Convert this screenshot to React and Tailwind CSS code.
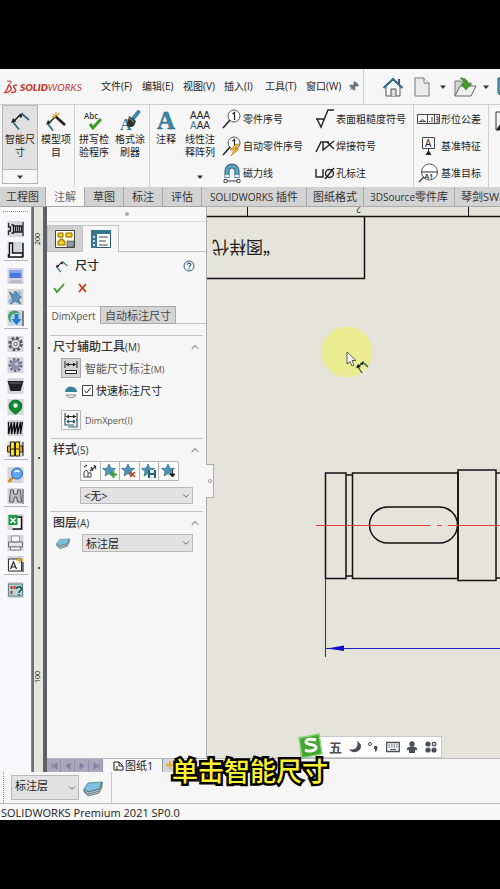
import { useState } from 'react';
import { Pin, ChevronUp, ChevronDown } from 'lucide-react';
import clsx from 'clsx';

const Svg = ({ w = 16, h = w, box = `0 0 ${w} ${h}`, className, children }) => (
  <svg width={w} height={h} viewBox={box} fill="none" aria-hidden="true" className={clsx('shrink-0 overflow-visible', className)}>
    {children}
  </svg>
);

/* ---------- menu bar ---------- */

const DsLogo = () => (
  <Svg w={14} h={14}>
    <path d="M3 1.2h3.6c1.3.2.8 1.8-2 3.2" stroke="#c8352b" strokeWidth="1" />
    <path d="M4.6 5.2C3.8 8 2.4 11 .8 12.6c3.6.2 6.2-1.8 6.4-4 .1-1.8-1.4-2.9-2.6-3.4z" stroke="#c8352b" strokeWidth="1.3" />
    <path d="M13 5.4c-2.2-.8-4 .2-3.4 1.7.4 1 2.4 1.6 2.1 3.2-.4 1.9-2.6 2.4-4.6 2" stroke="#c8352b" strokeWidth="1.4" />
  </Svg>
);

const DocIcon = () => (
  <Svg w={16} h={20}>
    <path d="M1 1h9l5 5v13H1z" fill="#ececec" stroke="#777" />
    <path d="M10 1v5h5" fill="#fff" stroke="#777" />
  </Svg>
);

const OpenIcon = () => (
  <Svg w={23} h={20}>
    <path d="M1 19V4h6l2 2h8v5" fill="#d5d5d5" stroke="#777" />
    <path d="M1 19l5-10h16l-5 10z" fill="#eee" stroke="#666" />
    <path d="M6 1c5 0 8 2 8 6h3l-5 6-5-6h3C10 4 8 3 6 1z" fill="#3f9a2b" stroke="#2a731b" strokeWidth=".6" />
  </Svg>
);

const SaveIcon = () => (
  <Svg w={20} h={20}>
    <path d="M1 1h18v18H4l-3-3z" fill="#5a9dbb" stroke="#245d78" />
    <path d="M5 1h10v8H5z" fill="#fff" />
    <path d="M6 13h8v6H6z" fill="#d5e4ea" />
  </Svg>
);

const Caret = () => (
  <Svg w={6} h={4}>
    <path d="M0 .5h6L3 4z" fill="#333" />
  </Svg>
);

const menus = ['文件(F)', '编辑(E)', '视图(V)', '插入(I)', '工具(T)', '窗口(W)'];

const MenuBar = () => (
  <header className="flex h-9 shrink-0 items-center border-b border-[#cfcfcf]">
    <div className="flex w-[98px] shrink-0 items-center gap-0.5 pl-1">
      <DsLogo />
      <span className="font-['Lato'] text-[10px] italic leading-none text-[#c8352b]">
        <b className="font-extrabold">SOLID</b>WORKS
      </span>
    </div>
    <nav className="flex shrink-0">
      {menus.map((m) => (
        <button key={m} className="w-[41px] text-left text-[10px] whitespace-nowrap text-[#222] pl-[3px]">
          {m}
        </button>
      ))}
    </nav>
    <button aria-label="固定" className="ml-1 mr-1">
      <Pin className="h-[11px] w-[11px] rotate-45 fill-gray-500 text-gray-500" />
    </button>
    <div className="flex h-full shrink-0 items-center border-l border-[#cfcfcf] pl-[18px]">
      <button aria-label="主页">
        <Svg w={22} h={20}>
          <path d="M4 9l7-6 7 6v10H4z" fill="#fafafa" stroke="#555" />
          <path d="M9 19v-7h5v7" stroke="#555" fill="#ddd" />
          <path d="M16 2v4l2 2V2z" fill="#555" />
          <path d="M1.5 11L11 2l9.500 9" stroke="#2f6c8b" strokeWidth="2.200" />
        </Svg>
      </button>
      <button aria-label="新建" className="ml-2.5"><DocIcon /></button>
      <button aria-label="新建选项" className="ml-2.5"><Caret /></button>
      <button aria-label="打开" className="ml-2"><OpenIcon /></button>
      <button aria-label="打开选项" className="ml-1.5"><Caret /></button>
      <button aria-label="保存" className="ml-2"><SaveIcon /></button>
    </div>
  </header>
);

/* ---------- ribbon ---------- */

const SmartDim = ({ w = 20, className }) => (
  <Svg w={w} box="0 0 20 20" className={className}>
    <path d="M3 11l8-8" stroke="#222" strokeWidth="1.600" />
    <path d="M1 12l2-5 3.500 3.500zM8 5l5-3.500L11.500 7z" fill="#222" />
    <path d="M3 11l6 7.500M12 3l7 6" stroke="#2d6c87" strokeWidth="1.800" />
  </Svg>
);

const ModelItem = () => (
  <Svg w={20}>
    <path d="M2 13l8-8" stroke="#222" strokeWidth="1.500" />
    <path d="M0 14l2-5 3 3z" fill="#222" />
    <path d="M2 13l5 6.500" stroke="#2d6c87" strokeWidth="1.800" />
    <path d="M9 5l10 9" stroke="#222" strokeWidth="2.600" />
    <path d="M7 3l3 3M10 1v3M6 6h3M13 2l-2 3" stroke="#d9a13a" strokeWidth="1.300" />
  </Svg>
);

const Spell = () => (
  <Svg w={20}>
    <text x="0" y="8" fontSize="8" fontWeight="600" fill="#333" fontFamily="Open Sans">Abc</text>
    <path d="M6 13l3 4 8-9" stroke="#3b9a2a" strokeWidth="3" />
  </Svg>
);

const Painter = () => (
  <Svg w={20}>
    <text x="0" y="19" fontSize="16" fontWeight="700" fill="#2f7896" fontFamily="Liberation Serif">A</text>
    <path d="M18.500 1l-5 6" stroke="#3c87a8" strokeWidth="4" strokeLinecap="round" />
    <path d="M9 5l7 5-2 5c-3 2-6 1-7-1z" fill="#333" />
    <path d="M9 7l5 4" stroke="#999" />
  </Svg>
);

const NoteA = () => (
  <Svg w={20}>
    <text x="1" y="18" fontSize="25" fontWeight="700" fill="#3a86a6" stroke="#1f5d78" strokeWidth=".5" fontFamily="Liberation Serif">A</text>
  </Svg>
);

const LinearNote = () => (
  <Svg w={22} h={20}>
    <g fontSize="10" fontFamily="Liberation Sans" fill="#222">
      <text x="1" y="8">AAA</text>
      <text x="1" y="18"><tspan fill="#2d7fa3">A</tspan>AA</text>
    </g>
  </Svg>
);

const Balloon = ({ bolt }) => (
  <Svg w={20} h={20}>
    <circle cx="12" cy="7" r="6" stroke="#555" fill="#fff" />
    <path d="M8 11l-7 8" stroke="#222" strokeWidth="1.500" />
    <path d="M10.500 5l2-1.500V11" stroke="#222" strokeWidth="1.200" />
    {bolt && <path d="M14 8l-6 6h4l-3 6 8-7h-4l4-5z" fill="#f0b429" stroke="#a96d10" strokeWidth=".5" />}
  </Svg>
);

const Magnet = () => (
  <Svg w={20} h={20}>
    <path d="M5 15V8a5 5 0 0 1 10 0v7" stroke="#1f5d78" strokeWidth="5" />
    <path d="M5 15V8a5 5 0 0 1 10 0v7" stroke="#5fa6c4" strokeWidth="3" />
    <path d="M3 13h4M13 13h4" stroke="#eee" strokeWidth="2" />
    <path d="M3 18h14" stroke="#333" />
    <path d="M2 16.500h3v3H2zM15 16.500h3v3h-3z" fill="#fff" stroke="#333" strokeWidth=".8" />
  </Svg>
);

const Roughness = () => (
  <Svg w={20} h={20}>
    <path d="M1 10h8M2 10l4 8L13 1h6" stroke="#222" strokeWidth="1.400" />
  </Svg>
);

const Weld = () => (
  <Svg w={20} h={14}>
    <path d="M1 13L6 3h8M8 3v8l11-9M12 3l7 7" stroke="#222" strokeWidth="1.400" />
  </Svg>
);

const Hole = () => (
  <Svg w={20} h={14}>
    <path d="M1 3v8h7V3M10 13l9-11" stroke="#222" strokeWidth="1.400" />
    <circle cx="14.500" cy="7.500" r="4" stroke="#222" strokeWidth="1.400" />
  </Svg>
);

const GeoTol = () => (
  <Svg w={23} h={12}>
    <path d="M.5 1.500h22v9H.5zM10.500 1.500v9M17.500 1.500v9M2 8.500h7M3.500 8a2.500 3 0 0 1 4 0" stroke="#444" />
    <path d="M12.500 8v1M15 4v5M19 4h2v2.500h-1.500H21V9h-2" stroke="#444" />
  </Svg>
);

const Datum = () => (
  <Svg w={23} h={20}>
    <path d="M5.500 1.500h12v11h-12zM11.500 12.500V19" stroke="#444" />
    <path d="M8.500 19l3-5 3 5z" fill="#222" />
    <text x="8" y="11" fontSize="10" fill="#222" fontFamily="Open Sans">A</text>
  </Svg>
);

const DatumTarget = () => (
  <Svg w={23} h={20}>
    <circle cx="12.500" cy="9" r="8" stroke="#555" fill="#fff" />
    <path d="M4.500 9h16M7 14l-5 5" stroke="#333" strokeWidth="1.200" />
    <text x="7.500" y="15.500" fontSize="7" fontWeight="600" fill="#222" fontFamily="Open Sans">A1</text>
  </Svg>
);

const BigButton = ({ icon, lines, caret }) => (
  <button className="flex h-full w-9 shrink-0 flex-col items-center pt-1.5 text-[10px] leading-[13px] text-[#222]">
    {icon}
    <span className="mt-[2px] whitespace-nowrap">{lines[0]}</span>
    <span>{lines[1]}</span>
    {caret && <span className="mt-auto mb-2"><Caret /></span>}
  </button>
);

const SmallColumn = ({ items, className }) => (
  <div className={clsx('flex shrink-0 flex-col justify-between py-1', className)}>
    {items.map(([icon, label]) => (
      <button key={label} className="flex h-5 items-center gap-px text-[10px] whitespace-nowrap text-[#222]">
        {icon}
        {label}
      </button>
    ))}
  </div>
);

const Ribbon = () => (
  <section className="flex h-[82px] shrink-0 overflow-hidden">
    <div className="flex shrink-0 border-r border-[#d0d0d0] pl-0.5">
      <button className="flex h-[79px] w-9 flex-col items-center border border-[#b5b5b5] bg-[#e0e0e0] pt-[5px] text-[10px] leading-[13px] text-[#222]">
        <SmartDim />
        <span className="mt-0.5">智能尺</span>
        <span>寸</span>
        <span className="mt-auto flex h-3.5 w-full items-center justify-center border-t border-[#b5b5b5] bg-[#f6f6f6]"><Caret /></span>
      </button>
      <BigButton icon={<ModelItem />} lines={['模型项', '目']} />
    </div>
    <div className="flex shrink-0 border-r border-[#d0d0d0] pr-px pl-px">
      <BigButton icon={<Spell />} lines={['拼写检', '验程序']} />
      <BigButton icon={<Painter />} lines={['格式涂', '刷器']} />
    </div>
    <div className="flex shrink-0 border-r border-[#d0d0d0]">
      <div className="flex w-8 justify-center"><BigButton icon={<NoteA />} lines={['注释', '']} /></div>
      <div className="flex pr-1"><BigButton icon={<LinearNote />} lines={['线性注', '释阵列']} caret /></div>
      <SmallColumn
        className="w-[93px]"
        items={[[<Balloon />, '零件序号'], [<Balloon bolt />, '自动零件序号'], [<Magnet />, '磁力线']]}
      />
      <SmallColumn
        className="w-[98px]"
        items={[[<Roughness />, '表面粗糙度符号'], [<Weld />, '焊接符号'], [<Hole />, '孔标注']]}
      />
    </div>
    <div className="flex shrink-0 border-r border-[#d0d0d0] pl-[3px]">
      <SmallColumn
        className="w-[71px]"
        items={[[<GeoTol />, '形位公差'], [<Datum />, '基准特征'], [<DatumTarget />, '基准目标']]}
      />
    </div>
    <button aria-label="区域剖面线" className="mt-1.5 ml-1.5 h-5 shrink-0">
      <Svg w={20}>
        <path d="M1 1h18v18H1z" stroke="#333" />
        <path d="M1 19l7-10 5 10z" fill="#222" />
      </Svg>
    </button>
  </section>
);

const tabs = [
  ['', '工程图'], ['', '注解'], ['', '草图'], ['', '标注'], ['', '评估'],
  ['SOLIDWORKS ', '插件'], ['', '图纸格式'], ['3DSource', '零件库'], ['', '琴剑SW工具'],
];

const RibbonTabs = ({ active, onChange }) => (
  <nav className="flex h-5 shrink-0 overflow-hidden border-b border-[#a8a8a8] bg-[#d2d2d2]">
    {tabs.map(([latin, text]) => (
      <button
        key={text}
        onClick={() => onChange(text)}
        className={clsx(
          'flex shrink-0 items-center border-r border-[#a8a8a8] text-[11px] leading-none whitespace-pre',
          text.length > 2 ? 'px-1.5' : 'px-2',
          active === text ? 'bg-[#f6f6f6] text-[#666]' : 'text-[#333]'
        )}
      >
        {latin && <span className="text-[10px]">{latin}</span>}
        {text}
      </button>
    ))}
  </nav>
);

/* ---------- left tool strip ---------- */

const Tile = ({ children }) => (
  <Svg w={17} h={16} box="0 0 16 16">
    <path d="M0 0h16v16H0z" fill="#d4d6da" />
    {children}
  </Svg>
);

const toolGroups = [
  [
    ['螺栓', <Tile><path d="M1 2v4h2v4H1v4M4 4h2v8H4M6 5h8v6H6M8 5v6M10 5v6M12 5v6M15.500 1v14" stroke="#222" strokeWidth="1.300" /></Tile>],
    ['型材', <Tile><path d="M2 1h3v10h10v4H1V13h1zM15.500 1v14" stroke="#111" strokeWidth="1.400" fill="#fff" /></Tile>],
  ],
  [
    ['显示器', <Tile><path d="M2 2h12v8H2z" fill="#4a78e0" /><path d="M2 2h12v3H2z" fill="#86aaf2" /><path d="M3 12h10l2 3H1z" fill="#b6bccb" /></Tile>],
    ['装配', <Tile><path d="M2 3l4 3 2-4 3 4 3 2-3 2 2 5-5-3-5 3 2-5z" fill="#5f92bd" stroke="#37597c" strokeWidth=".7" /><circle cx="12" cy="4" r="2" fill="#8db9dc" /><circle cx="3" cy="12" r="2" fill="#8db9dc" /></Tile>],
    ['下载', <Tile><circle cx="7" cy="7" r="6.500" fill="#46a067" /><circle cx="9" cy="9" r="6" fill="#b7d6ef" /><path d="M7 4h4v5h3l-5 6-5-6h3z" fill="#2c75cf" /><path d="M15.500 1v15" stroke="#222" /></Tile>],
  ],
  [
    ['齿轮', <Tile><circle cx="8" cy="8" r="6" stroke="#555" strokeWidth="2.500" strokeDasharray="2.700 2" /><circle cx="8" cy="8" r="4.500" fill="#eee" stroke="#555" /><circle cx="8" cy="8" r="1.800" fill="#fff" stroke="#555" /></Tile>],
    ['斜齿轮', <Tile><circle cx="8" cy="8" r="5.500" stroke="#686d8e" strokeWidth="3" strokeDasharray="2.300 1.500" /><circle cx="8" cy="8" r="4.800" fill="#8c90aa" /><circle cx="9" cy="7" r="1.500" fill="#d3d5e2" /></Tile>],
    ['带轮', <Tile><path d="M0 3h16l-3 10H3z" fill="#222" /><path d="M2 5h12" stroke="#777" /></Tile>],
    ['凸轮', <Tile><path d="M8 15C3 12 1 9 2 5c2-5 10-5 12 0 1 4-1 7-6 10z" fill="#0d8a31" stroke="#07601f" /><circle cx="8" cy="6.500" r="2.200" fill="#fff" /></Tile>],
    ['弹簧', <Tile><path d="M1 2v12L4 2v12L7 2v12l3-12v12l3-12v12l2-12" stroke="#111" strokeWidth="1.300" /></Tile>],
    ['轴承', <Tile><path d="M0 5h15v6H0z" fill="#f4a21c" stroke="#222" /><path d="M3 1h4v14H3zM8 1h4v14H8z" fill="#ffe11f" stroke="#222" /><path d="M3 8h9M15.500 1v14" stroke="#222" /></Tile>],
  ],
  [
    ['查找', <Tile><path d="M1 15l5-5" stroke="#d98d27" strokeWidth="3" /><circle cx="9.500" cy="6.500" r="5.500" fill="#5ea8f2" stroke="#2466bb" /><path d="M7 5a3.500 3.500 0 0 1 5 0" stroke="#fff" strokeWidth="1.500" /></Tile>],
    ['望远镜', <Tile><path d="M3 2h3v4h4V2h3l1 12h-4l-1-5H7l-1 5H2zM15.500 1v15" fill="#bbb" stroke="#555" /></Tile>],
  ],
  [
    ['表格', <Tile><path d="M6 3h8v12H5" fill="#fff" stroke="#111" strokeWidth="1.500" /><path d="M1 1h9v10H1z" fill="#1f9a42" /><path d="M3 4l5 5M8 4L3 9" stroke="#fff" strokeWidth="1.500" /></Tile>],
    ['打印', <Tile><path d="M4 1h8v6H4z" fill="#fff" stroke="#999" /><path d="M1 7h14v5H1z" fill="#e7e7e7" stroke="#666" /><path d="M3 12h10v3H3z" fill="#fff" stroke="#777" /></Tile>],
    ['文字', <Tile><path d="M1 3h13v12H1z" fill="#fff" stroke="#333" /><path d="M3 13L6 6l3 7M4 11h4" stroke="#222" strokeWidth="1.200" /><path d="M12 0l1 3 3 1-3 1-1 3-1-3-3-1 3-1z" fill="#f0a01e" /><path d="M15.500 6v10" stroke="#111" /></Tile>],
  ],
  [
    ['帮助', <Tile><path d="M1 2h14v12H1z" fill="#b4d4d6" stroke="#5c8287" /><path d="M3 4h2v3H3zM6 4h2v3H6zM3 9h2v3H3z" fill="#cf2727" /><path d="M9 7c0-3 5-3 5 0 0 2-2.500 1.500-2.500 4M11.500 12v1.500" stroke="#194b50" strokeWidth="1.500" /></Tile>],
  ],
];

const ToolStrip = () => (
  <aside className="flex w-8 shrink-0 flex-col items-center border-r border-[#8b8e92] bg-[#f8f8fa] pt-1">
    <div className="mb-0.5 w-[25px] border-t border-dotted border-[#888]" />
    {toolGroups.map((group, i) => (
      <div
        key={i}
        className={clsx('flex w-6 flex-col items-center gap-[5px] pb-0.5 pt-[7px]', i < toolGroups.length - 1 && 'border-b border-[#b9b2bb]')}
      >
        {group.map(([label, icon]) => (
          <button key={label} aria-label={label}>{icon}</button>
        ))}
      </div>
    ))}
  </aside>
);

const Tick = () => <span className="my-[54px] ml-1 h-0.5 w-0.5 shrink-0 bg-[#555]" />;

const Ruler = () => (
  <div className="flex w-[15px] shrink-0 flex-col items-start overflow-hidden border-r-4 border-l-2 border-r-[#5c6068] border-l-[#6c7076] bg-[#e5e5db] pt-[26px] text-[7px] leading-none text-[#222]">
    <span className="mb-12 [writing-mode:vertical-rl] rotate-180">200</span>
    <Tick />
    <Tick />
    <Tick />
    <span className="mt-12 [writing-mode:vertical-rl] rotate-180">100</span>
  </div>
);

/* ---------- property panel ---------- */

const Section = ({ title, hotkey, children, className }) => (
  <section className={clsx('mx-[3px] border-t border-[#c4c4c4]', className)}>
    <h3 className="flex h-[22px] items-center justify-between pr-0.5 pl-[3px] text-[12px] font-medium text-[#333]">
      <span>{title}<span className="text-[10px]">({hotkey})</span></span>
      <ChevronUp className="h-3 w-3 text-[#555]" />
    </h3>
    {children}
  </section>
);

const Dropdown = ({ label, value, className, selectClass }) => (
  <div className={clsx('relative', className)}>
    <select aria-label={label} className={clsx('block w-full appearance-none border border-[#b9b9b9] bg-[#e2e2e2] pl-[3px] text-[11px] leading-none text-[#222]', selectClass)}>
      <option>{value}</option>
    </select>
    <ChevronDown className="pointer-events-none absolute top-1/2 right-0.5 h-2.5 w-2.5 -translate-y-1/2 text-[#555]" />
  </div>
);

const Star = ({ children }) => (
  <Svg w={16}>
    <path d="M7 1l1.800 4.200 4.700.3-3.600 3 1.200 4.500L7 10.500 3 13l1.100-4.500-3.600-3 4.700-.3z" fill="#4d93b3" stroke="#2a6580" strokeWidth=".7" />
    {children}
  </Svg>
);

const styleButtons = [
  ['应用默认属性', <Svg w={16}><path d="M2 9l2-2 2 2v5H2zM6 10h3v4H6" stroke="#444" /><path d="M2 4l3-2M8 8l6-5M9 4l2 4M12 2l2 4" stroke="#333" strokeWidth="1.200" /></Svg>],
  ['添加样式', <Star><path d="M11.500 8v7M8 11.500h7" stroke="#3c9a2b" strokeWidth="2" /></Star>],
  ['删除样式', <Star><path d="M9 9l5 5M14 9l-5 5" stroke="#c5391d" strokeWidth="1.500" /></Star>],
  ['保存样式', <Star><path d="M7 7h8v8H7z" fill="#285f7b" /><path d="M9 7h4v3H9zM9 12h4v3H9z" fill="#e5eff4" /></Star>],
  ['加载样式', <Star><path d="M11.500 7v4M9 11l2.500 3 2.500-3z" stroke="#222" fill="#222" /></Star>],
];

const LayerIcon = ({ w = 14 }) => (
  <Svg w={w} h={w} box="0 0 20 20">
    <path d="M1 11l4-6 14-1-3 7-11 3z" fill="#7cc1e2" stroke="#44738a" strokeWidth=".7" />
    <path d="M1 11l4 3 12-3 2-7v5l-3 6-11 3-4-4z" fill="#b8cbd3" stroke="#4c5c64" strokeWidth=".8" />
    <path d="M1 13l4 3 12-3" stroke="#596e78" strokeWidth=".8" />
  </Svg>
);

const DimBox = ({ double }) => (
  <Svg w={16}>
    <path d="M2 1v7M14 1v7M3 4.500h10" stroke="#222" />
    <path d="M3 4.500l3-2v4zM13 4.500l-3-2v4z" fill="#222" />
    {double ? (
      <path d="M2 7v6h9M14 7v8H5M4 9.500h8M4 9.500l2-1.500M4 9.500l2 1.500M12 9.500l-2-1.500M12 9.500l-2 1.500" stroke="#1f5a74" strokeWidth="1.200" />
    ) : (
      <path d="M2.500 10.500h11v3h-11z" fill="#fff" stroke="#222" />
    )}
  </Svg>
);

const PropertyPanel = () => {
  const [quick, setQuick] = useState(true);

  return (
    <div className="relative flex w-40 shrink-0 flex-col border-r border-[#a9adb0] bg-[#f6f6f6]">
      <div className="flex h-[15px] items-center justify-center border-b border-[#dcdcdc]">
        <span className="h-1 w-1 rounded-full bg-[#a8a8a8]" />
      </div>
      <div className="mt-[3px] flex h-[27px]">
        <button aria-label="特征树" className="flex w-9 items-center justify-center border border-[#c0c0c0] bg-[#d0d0d0]">
          <Svg w={20} h={18}>
            <path d="M.500.500h19v17H.500z" fill="#fffbe0" stroke="#444" />
            <path d="M3 3h5v4H3zM11 3h6v4h-6zM5 9h3v2h2v4H3v-4h2z" fill="#f4cf2a" stroke="#8a6b09" />
            <path d="M12 11h7v6h-7z" fill="#8f979c" stroke="#444" strokeWidth=".6" />
          </Svg>
        </button>
        <button aria-label="属性" className="flex w-9 items-center justify-center border-t border-r border-[#c0c0c0]">
          <Svg w={20} h={18}>
            <path d="M.500.500h19v17H.500z" fill="#fff" stroke="#23596f" />
            <path d="M0 0h20v4H0zM0 4h6v14H0z" fill="#347690" />
            <path d="M2 7h2M2 11h2M2 15h2" stroke="#fff" strokeWidth="1.500" />
            <path d="M8 7h9M8 11h7M8 15h9" stroke="#444" strokeWidth="1.200" />
          </Svg>
        </button>
        <div className="flex-1 border-b border-[#c0c0c0]" />
      </div>
      <div className="mt-1 flex h-5 items-center px-2">
        <SmartDim w={13} />
        <h2 className="ml-[7px] flex-1 text-[12px] font-medium text-[#222]">尺寸</h2>
        <button aria-label="帮助" className="mr-[3px]">
          <Svg w={12}>
            <circle cx="6" cy="6" r="5" stroke="#2f6079" />
            <path d="M4.300 4.800c0-2.300 3.500-2.200 3.500 0 0 1.200-1.800 1.200-1.800 2.500M6 8.300v1.200" stroke="#2f6079" strokeWidth="1.200" />
          </Svg>
        </button>
      </div>
      <div className="mt-1.5 flex items-center gap-3 pl-1.5">
        <button aria-label="确定">
          <Svg w={12}><path d="M1 6l3 4 7-8" stroke="#429a2c" strokeWidth="1.800" /></Svg>
        </button>
        <button aria-label="取消">
          <Svg w={12}><path d="M2 2l7 8M9 2l-7 8" stroke="#c63722" strokeWidth="1.800" /></Svg>
        </button>
      </div>
      <div className="mt-3 flex h-[18px] items-stretch leading-none">
        <button className="w-[53px] border-t border-[#dcdcdc] text-[10px] text-[#555]">DimXpert</button>
        <button className="w-[76px] border border-[#aaa] bg-[#d4d4d4] text-[11px] whitespace-nowrap text-[#444]">自动标注尺寸</button>
        <div className="flex-1 border-b border-[#c4c4c4]" />
      </div>

      <Section title="尺寸辅助工具" hotkey="M" className="mt-[11px]">
        <div className="flex flex-col pl-[11px] text-[11px] leading-none text-[#555]">
          <div className="flex h-5 items-center gap-1">
            <button id="smart" className="flex h-5 w-5 items-center justify-center border border-[#a5a5a5] bg-[#d4d4d4]"><DimBox /></button>
            <label htmlFor="smart">智能尺寸标注<span className="text-[9px]">(M)</span></label>
          </div>
          <label className="flex h-6 items-center gap-[3px] pl-1 text-[#222]">
            <Svg w={12} h={14} className="mt-1.5 mr-0.5">
              <path d="M0 6a6 5.500 0 0 1 12 0z" fill="#3a809c" />
              <path d="M1 9h10a5.300 4 0 0 1-10 0z" fill="#fff" stroke="#666" strokeWidth=".8" />
            </Svg>
            <span className="relative flex">
              <input
                type="checkbox"
                checked={quick}
                onChange={(e) => setQuick(e.target.checked)}
                className="h-[11px] w-[11px] appearance-none border border-[#444] bg-white"
              />
              {quick && (
                <Svg w={11} className="pointer-events-none absolute inset-0">
                  <path d="M2.500 5.500L4.500 8l4-5" stroke="#222" />
                </Svg>
              )}
            </span>
            快速标注尺寸
          </label>
          <div className="mt-2 flex h-5 items-center gap-1">
            <button id="dimx" className="flex h-5 w-5 items-center justify-center border border-[#b5b5b5] bg-[#fafafa]"><DimBox double /></button>
            <label htmlFor="dimx" className="text-[9px]">DimXpert(I)</label>
          </div>
        </div>
      </Section>

      <Section title="样式" hotkey="S" className="mt-2">
        <div className="ml-[30px] flex h-5 w-[99px] divide-x divide-[#b5b5b5] border border-[#b5b5b5] bg-[#fbfbfb]">
          {styleButtons.map(([label, icon]) => (
            <button key={label} aria-label={label} className="flex flex-1 items-center justify-center">{icon}</button>
          ))}
        </div>
        <Dropdown label="样式" value="<无>" className="mt-1.5 mr-[10px] ml-[30px]" selectClass="h-[17px]" />
      </Section>

      <Section title="图层" hotkey="A" className="mt-[7px]">
        <div className="flex items-center pr-[10px] pl-1.5">
          <LayerIcon />
          <Dropdown label="图层" value="标注层" className="ml-3 flex-1" selectClass="h-[18px]" />
        </div>
      </Section>

      {/* collapse handle */}
      <button aria-label="折叠" className="absolute top-[257px] left-full z-10 flex h-[34px] w-2 items-center justify-center border border-l-0 border-[#a9adb0] bg-[#f6f6f6]">
        <span className="h-1 w-1 rounded-full border border-[#999]" />
      </button>
    </div>
  );
};

/* ---------- drawing ---------- */

const Drawing = () => (
  <svg className="absolute inset-0 h-full w-full" fill="none" aria-label="轴零件图">
    <g stroke="#111">
      <path d="M40.500 0v9M261.500 0v9" />
      <path d="M0 9.500h2000M0 71.500h157.500V9.500" strokeWidth="1.500" />
    </g>
    <g fill="#222" fontFamily="'Noto Sans CJK SC', sans-serif">
      <text fontSize="17" transform="translate(65 34) rotate(180)" y="0">
        <tspan x="-8">“</tspan>
        <tspan x="9">图样代</tspan>
      </text>
      <text fontSize="9" transform="translate(154 -1) rotate(180)">2</text>
    </g>

    <circle cx="140" cy="145" r="25.500" fill="#ecec92" />
    <path d="M140 145v12l3-2.500 2 4.500 2-1-2-4.500h4z" fill="#fff" stroke="#333" strokeWidth=".8" />
    <g transform="translate(149 154)">
      <path d="M2 6l5-5M2 6l4 6M8 2l4 4" stroke="#1f5a50" strokeWidth="1.300" />
      <path d="M0 7l2-4 3 3zM4 3l4-3-1 4z" fill="#111" />
    </g>

    {/* shaft outline */}
    <g stroke="#111" strokeWidth="1.500">
      <path d="M118.500 266h20.500v105.500h-20.500zM145.500 266H251v105.500H145.500z" />
      <path d="M139 268h6.500M139 369h6.500" />
      <path d="M251 263h38v110.500h-38zM289 266h2000M289 371h2000" />
      <rect x="162.500" y="300" width="88" height="36" rx="18" />
    </g>
    <path d="M109 318.500h114M230 318.500h5M241 318.500h2000" stroke="#e23c3c" />

    <g stroke="#2222dd">
      <path d="M118.500 372v78M118.500 441.500H2000" />
      <path d="M120 441.500l17-3v5.500z" fill="#1111c8" stroke="none" />
    </g>
  </svg>
);

const ImeBar = () => (
  <div className="absolute bottom-0 left-[93px] flex h-[22px] w-[142px] items-center justify-between border border-[#c9c9c9] bg-white pr-1 pl-7 text-[#4a4e56]">
    <div className="absolute -top-1 -left-1">
      <Svg w={26} h={26}>
        <path d="M2 5l20-4 3 20-20 4z" fill="#43a82f" stroke="#8ed37f" strokeWidth="1.500" />
        <path d="M19 7c-4-1.500-10-1-10 2 0 3.500 10 1.500 10 5.500 0 3.500-7 4.500-11 2.500" stroke="#fff" strokeWidth="3" />
      </Svg>
    </div>
    <span className="text-[13px] leading-none font-bold">五</span>
    <Svg w={12}><path d="M8 0c2 6-2 10-8 8 2 5 12 4 12-3 0-2-2-4-4-5z" fill="#4a4e56" /></Svg>
    <Svg w={12}><circle cx="3" cy="3" r="1.500" stroke="#4a4e56" /><path d="M7 5h3c1 3 0 5-2 6V8H7z" fill="#4a4e56" /></Svg>
    <Svg w={14} h={12}>
      <path d="M.700 1.500h12.600v9H.700z" stroke="#4a4e56" strokeWidth="1.300" />
      <path d="M2.500 4h9M2.500 6h9" stroke="#4a4e56" strokeWidth="1.200" strokeDasharray="1.500 1" />
      <path d="M4 8.500h6" stroke="#4a4e56" />
    </Svg>
    <Svg w={12}><circle cx="6" cy="3" r="2.700" fill="#4a4e56" /><path d="M1 7c3-2 7-2 10 0v2H9v3H3V9H1z" fill="#4a4e56" /></Svg>
    <Svg w={12}>
      <g fill="#4a4e56">
        <circle cx="3" cy="3" r="2.600" /><circle cx="9" cy="3" r="2" stroke="#4a4e56" />
        <circle cx="3" cy="9" r="2.600" /><circle cx="9" cy="9" r="2.600" />
      </g>
      <circle cx="9" cy="3" r="1" fill="#fff" />
    </Svg>
  </div>
);

const navPaths = ['M3 2v6M8 2L4 5l4 3z', 'M7 2L3 5l4 3z', 'M3 2l4 3-4 3z', 'M8 2v6M3 2l4 3-4 3z'];

const SheetBar = () => (
  <div className="flex h-3.5 shrink-0 items-stretch border-t border-[#b7b7b7] bg-[#f6f6f6]">
    {navPaths.map((d) => (
      <button key={d} aria-label="图纸导航" className="flex w-3.5 items-center justify-center border-r border-[#9490aa] bg-[#aaa6bd]">
        <Svg w={10}><path d={d} fill="#8581a0" stroke="#8581a0" /></Svg>
      </button>
    ))}
    <button className="ml-2.5 flex w-[49px] items-center gap-px text-[11px] leading-none whitespace-nowrap text-[#222]">
      <Svg w={11} h={10}><path d="M1 1h5l4 4v4H1zM6 1v4h4M4 5v4" stroke="#222" fill="#fff" /></Svg>
      图纸1
    </button>
    <button aria-label="添加图纸" className="w-5 border-l border-[#999] bg-[#d5d3df]">
      <Svg w={12}><path d="M7 1v8M3 5h8" stroke="#e3ae39" strokeWidth="2" /></Svg>
    </button>
  </div>
);

export default function App() {
  const [tab, setTab] = useState('注解');

  return (
    <div className="flex h-screen flex-col overflow-hidden bg-black py-[69px] font-['Open_Sans','Noto_Sans_CJK_SC',sans-serif]">
      <div className="relative flex min-h-0 flex-1 flex-col overflow-hidden bg-[#f6f6f6]">
        <MenuBar />
        <Ribbon />
        <RibbonTabs active={tab} onChange={setTab} />

        <main className="flex min-h-0 flex-1">
          <ToolStrip />
          <Ruler />
          <div className="flex min-w-0 flex-1 flex-col">
            <div className="flex min-h-0 flex-1">
              <PropertyPanel />
              <div className="relative flex-1 overflow-hidden bg-[#e5e4da]">
                <Drawing />
                <ImeBar />
              </div>
            </div>
            <SheetBar />
          </div>
        </main>

        <div className="flex h-8 shrink-0 items-center border-b border-[#b9b9b9]">
          <div className="mr-[7px] ml-[3px] h-full border-l border-dotted border-[#888]" />
          <Dropdown label="图层" value="标注层" className="w-[68px]" selectClass="h-[25px] pb-1" />
          <button aria-label="图层属性" className="ml-1"><LayerIcon w={20} /></button>
          <div className="ml-2 h-full border-l border-[#c5c5c5]" />
        </div>
        <footer className="flex h-4 shrink-0 items-center pl-px text-[11px] leading-none text-[#222]">
          SOLIDWORKS Premium 2021 SP0.0
        </footer>

        {/* caption */}
        <p className="absolute bottom-[34px] left-1/2 -translate-x-1/2 text-[26px] leading-[30px] font-medium whitespace-nowrap text-[#fdf22f] [-webkit-text-stroke:5px_#000] [paint-order:stroke_fill]">
          单击智能尺寸
        </p>
      </div>
    </div>
  );
}
